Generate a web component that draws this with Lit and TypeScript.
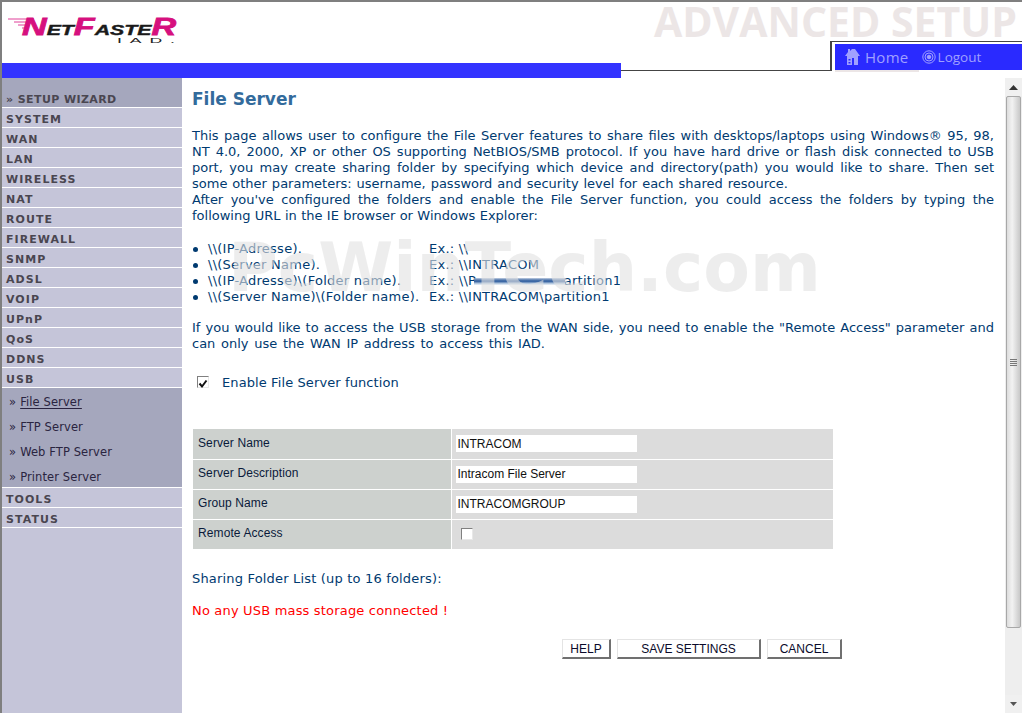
import { LitElement, html, css } from "lit";
import { customElement } from "lit/decorators.js";

const TOP = ["SYSTEM","WAN","LAN","WIRELESS","NAT","ROUTE","FIREWALL","SNMP","ADSL","VOIP","UPnP","QoS","DDNS","USB"];
const SUB = ["File Server","FTP Server","Web FTP Server","Printer Server"];
const LINES: [string, number | null][] = [
  ["This page allows user to configure the File Server features to share files with desktops/laptops using Windows\u00ae 95, 98,", 802],
  ["NT 4.0, 2000, XP or other OS supporting NetBIOS/SMB protocol. If you have hard drive or flash disk connected to USB", 802],
  ["port, you may create sharing folder by specifying which device and directory(path) you would like to share. Then set", 802],
  ["some other parameters: username, password and security level for each shared resource.", 596],
  ["After you've configured the folders and enable the File Server function, you could access the folders by typing the", 802],
  ["following URL in the IE browser or Windows Explorer:", 346],
];
const LIST = [
  ["\\\\(IP-Adresse).", "Ex.: \\\\"],
  ["\\\\(Server Name).", "Ex.: \\\\INTRACOM"],
  ["\\\\(IP-Adresse)\\(Folder name).", "Ex.: \\\\P                    artition1"],
  ["\\\\(Server Name)\\(Folder name).", "Ex.: \\\\INTRACOM\\partition1"],
];

@customElement("app-root")
export class AppRoot extends LitElement {
  static styles = css`
    :host { display: block; width: 1022px; height: 713px; overflow: hidden; background: #fff; font-family: "DejaVu Sans", Verdana, sans-serif; }
    .page { box-sizing: border-box; width: 1022px; height: 713px; border-top: 2px solid #7f7f7f; border-left: 2px solid #7f7f7f; display: flex; flex-direction: column; position: relative; }
    header { display: grid; grid-template-columns: 619px 209px 192px; grid-template-rows: 39px 30px 7px; height: 76px; flex: none; }
    .brand { grid-column: 1; grid-row: 1 / 4; display: flex; flex-direction: column; }
    .logo-wrap { height: 61px; padding: 14px 0 0 6px; box-sizing: border-box; }
    .bluebar { height: 15px; background: #3333ff; }
    .title { grid-column: 2 / 4; grid-row: 1; justify-self: end; padding-right: 5px; font: 700 41px/39px "Open Sans", sans-serif; color: #ece6e6; white-space: nowrap; }
    .tail { grid-column: 2; grid-row: 2; border-bottom: 1px solid #444; box-sizing: border-box; height: 30px; }
    .navbox { grid-column: 3; grid-row: 2 / 4; border-top: 1px solid #444; border-left: 2px solid #444; padding: 2px 0 0 3px; height: 27px; }
    .nav { background: #2a2aff; height: 26px; display: flex; align-items: center; padding-left: 10px; color: #a0a0ff; font-family: "Open Sans", sans-serif; }
    .pale { width: 84px; height: 2px; background: #ece6e6; }
    .nav svg { display: block; flex: none; }
    .home { font-size: 15px; margin: 0 13px 0 4px; letter-spacing: .3px; }
    .logout { font-size: 13.5px; margin-left: 2px; }

    .logo { width: 170px; height: 30px; position: relative; white-space: nowrap; font: italic 700 24px/22px "Liberation Sans", sans-serif; }
    .word { display: flex; align-items: baseline; height: 22px; padding-left: 14px; transform: scaleX(1.42); transform-origin: 14px 0; -webkit-text-stroke: .8px currentColor; }
    .p { color: #d6107e; font-size: 24px; }
    .k { color: #1a1a1a; font-size: 15px; -webkit-text-stroke: .4px currentColor; }
    .iad { position: absolute; left: 109px; top: 21px; font: 400 8px/8px "Liberation Sans", sans-serif; letter-spacing: 3.6px; color: #222; transform: scaleX(2.2); transform-origin: left; }
    .streak { position: absolute; left: 0; top: 2px; }

    .main { flex: 1; display: flex; min-height: 0; }
    aside { width: 180px; flex: none; background: #c5c5d9; color: #4a4650; font-weight: 700; font-size: 11px; letter-spacing: 1.05px; }
    .wizard { height: 30px; box-sizing: border-box; background: #a5a7bd; border-bottom: 1px solid #fff; padding: 15px 0 0 4px; line-height: 14px; letter-spacing: .4px; }
    .item { height: 20px; box-sizing: border-box; border-bottom: 1px solid #fff; padding: 4px 0 0 4px; line-height: 15px; }
    .sub { background: #a5a7bd; border-bottom: 1px solid #fff; height: 100px; box-sizing: border-box; font-weight: 400; font-size: 11.5px; letter-spacing: .1px; color: #2a2440; padding-top: 2px; }
    .subitem { height: 25px; padding-left: 7px; line-height: 24px; display: flex; gap: 4px; }
    .subitem u { text-underline-offset: 2px; }

    .content { flex: 1; min-width: 0; padding: 0 0 0 10px; color: #003a70; font-size: 13px; line-height: 16px; }
    h1 { margin: 10px 0 18px; font-size: 17px; line-height: 22px; font-weight: 700; color: #336b9c; }
    .j { display: block; text-align: justify; text-align-last: justify; white-space: nowrap; }
    ul { list-style: none; margin: 17px 0 15px; padding: 0; letter-spacing: .25px; }
    li { display: flex; height: 16px; white-space: pre; position: relative; }
    .dot { width: 16px; flex: none; }
    .dot::before { content: ""; display: block; width: 5px; height: 5px; border-radius: 50%; background: #003a70; margin: 6px 0 0 1px; }
    .a { width: 221px; flex: none; }
    .smear { position: absolute; left: 282px; top: 1px; width: 91px; height: 12px; background: linear-gradient(180deg,transparent 0 30%, #8aa4c8 40%, #2a5a9c 60%, #b8cce2 80%, transparent 95%); }
    .enable { display: flex; align-items: flex-start; gap: 13px; margin: 23px 0 38px 5px; height: 16px; }
    .enable b { font-weight: 400; letter-spacing: .1px; }
    .enable .cb { margin-top: 1px; }
    .cb { display: block; box-sizing: border-box; width: 12px; height: 12px; border: 1px solid; border-color: #808080 #e8e8e8 #e8e8e8 #808080; background: #fff; flex: none; }
    table { border-collapse: collapse; width: 640px; margin-left: 1px; font: 12px/16px "Liberation Sans", sans-serif; letter-spacing: .1px; color: #0a1a3a; table-layout: fixed; }
    td { height: 30px; box-sizing: border-box; padding: 0; border-bottom: 1px solid #fff; }
    tr:last-child td { border-bottom: none; }
    td:first-child { width: 258px; background: #cdd1ce; padding: 0 0 2px 5px; border-right: 1px solid #fff; }
    td:last-child { background: #dcdcdc; padding: 0 0 0 4px; }
    input { display: block; box-sizing: border-box; width: 181px; height: 17px; border: none; background: #fff; padding: 0 2px; margin: 0; font: 12px "Liberation Sans", sans-serif; color: #111; outline: none; }
    .rcb { margin: 0 0 0 5px; }
    .share { margin-top: 22px; letter-spacing: .18px; }
    .err { margin-top: 16px; color: #ff0000; letter-spacing: .18px; }
    .btns { display: flex; gap: 6px; margin: 20px 0 0 370px; }
    button { box-sizing: border-box; height: 20px; padding: 0; background: #fff; border: 1px solid; border-color: #e4e4e4 #707070 #707070 #e4e4e4; border-width: 1px 2px 2px 1px; font: 12px "Liberation Sans", sans-serif; color: #0a0a2a; }
    .help { width: 49px; }
    .save { width: 144px; }
    .cancel { width: 75px; }
    .sb { width: 17px; flex: none; background: #eeeeee; display: flex; flex-direction: column; align-items: center; }
    .sb-btn { width: 17px; height: 18px; background: #f0f0f0; display: flex; align-items: center; justify-content: center; flex: none; }
    .thumb { box-sizing: border-box; width: 15px; height: 532px; border: 1px solid #a8a8a8; border-radius: 2px; background: linear-gradient(90deg,#ddd,#f2f2f2 40%,#c8c8c8); display: flex; align-items: center; justify-content: center; }
    .grip { width: 7px; height: 7px; background: repeating-linear-gradient(180deg,#777 0 1px,transparent 1px 2px); }
    .sp { flex: 1; }
    .wm { position: absolute; left: 226px; top: 226px; font: 700 68px/80px "DejaVu Sans", sans-serif; color: rgba(225,225,225,.6); white-space: nowrap; pointer-events: none; }
  `;

  render() {
    return html`<div class="page">
      <header>
        <div class="brand">
          <div class="logo-wrap"><div class="logo">
            <svg class="streak" width="36" height="16" viewBox="0 0 36 16" fill="none" stroke="#e0409a" stroke-width="1"><path d="M0 1H26M6 4H24M10 7H22M14 10H20"/></svg>
            <div class="word"><span class="p">N</span><span class="k">ET</span><span class="p">F</span><span class="k">ASTE</span><span class="p">R</span></div>
            <span class="iad">IAD.</span>
          </div></div>
          <div class="bluebar"></div>
        </div>
        <div class="title">ADVANCED SETUP</div>
        <div class="tail"></div>
        <div class="navbox">
          <div class="nav">
            <svg width="16" height="18" viewBox="0 0 16 18" fill="#a0a0ff"><path d="M3 1h2v2l2-2h3l5 7h-2v9H9v-7H7v7H2V8H0l3-4Z"/><path d="M3.5 11h2v1.5h-2zM3.5 14h2v1.5h-2z" fill="#2a2aff"/></svg>
            <span class="home">Home</span>
            <svg width="14" height="14" viewBox="0 0 14 14" fill="none" stroke="#a0a0ff"><circle cx="7" cy="7" r="6.2"/><circle cx="7" cy="7" r="4"/><circle cx="7" cy="7" r="1.8" fill="#a0a0ff"/></svg>
            <span class="logout">Logout</span>
          </div>
          <div class="pale"></div>
        </div>
      </header>
      <div class="main">
        <aside>
          <div class="wizard">» SETUP WIZARD</div>
          ${TOP.map((t) => html`<div class="item">${t}</div>`)}
          <div class="sub">
            ${SUB.map((s, i) => html`<div class="subitem"><span>»</span>${i === 0 ? html`<u>${s}</u>` : html`<span>${s}</span>`}</div>`)}
          </div>
          <div class="item">TOOLS</div>
          <div class="item">STATUS</div>
        </aside>
        <div class="content">
          <h1>File Server</h1>
          <div>
            ${LINES.map(([l, w]) => html`<span class="j" style="width:${w}px">${l}</span>`)}
          </div>
          <ul>
            ${LIST.map((r, i) => html`<li><span class="dot"></span><span class="a">${r[0]}</span><span>${r[1]}</span>${i === 2 ? html`<span class="smear"></span>` : ""}</li>`)}
          </ul>
          <div>
            <span class="j" style="width:802px">If you would like to access the USB storage from the WAN side, you need to enable the "Remote Access" parameter and</span>
            <span class="j" style="width:353px">can only use the WAN IP address to access this IAD.</span>
          </div>
          <div class="enable">
            <span class="cb"><svg width="10" height="10" viewBox="0 0 10 10" fill="none" stroke="#111" stroke-width="2"><path d="M1.5 4.5 4 7.5 8.5 1.5"/></svg></span>
            <b>Enable File Server function</b>
          </div>
          <table>
            <tr><td>Server Name</td><td><input value="INTRACOM" /></td></tr>
            <tr><td>Server Description</td><td><input value="Intracom File Server" /></td></tr>
            <tr><td>Group Name</td><td><input value="INTRACOMGROUP" /></td></tr>
            <tr><td>Remote Access</td><td><span class="cb rcb"></span></td></tr>
          </table>
          <div class="share">Sharing Folder List (up to 16 folders):</div>
          <div class="err">No any USB mass storage connected !</div>
          <div class="btns">
            <button class="help">HELP</button>
            <button class="save">SAVE SETTINGS</button>
            <button class="cancel">CANCEL</button>
          </div>
        </div>
        <div class="sb">
          <div class="sb-btn"><svg width="9" height="5" viewBox="0 0 9 5" fill="#333"><path d="M4.5 0 9 5H0Z"/></svg></div>
          <div class="thumb"><div class="grip"></div></div>
          <div class="sp"></div>
          <div class="sb-btn"><svg width="7" height="4" viewBox="0 0 7 4" fill="#555"><path d="M0 0H7L3.5 4Z"/></svg></div>
        </div>
      </div>
      <div class="wm">PcWinTech.com</div>
    </div>`;
  }
}
